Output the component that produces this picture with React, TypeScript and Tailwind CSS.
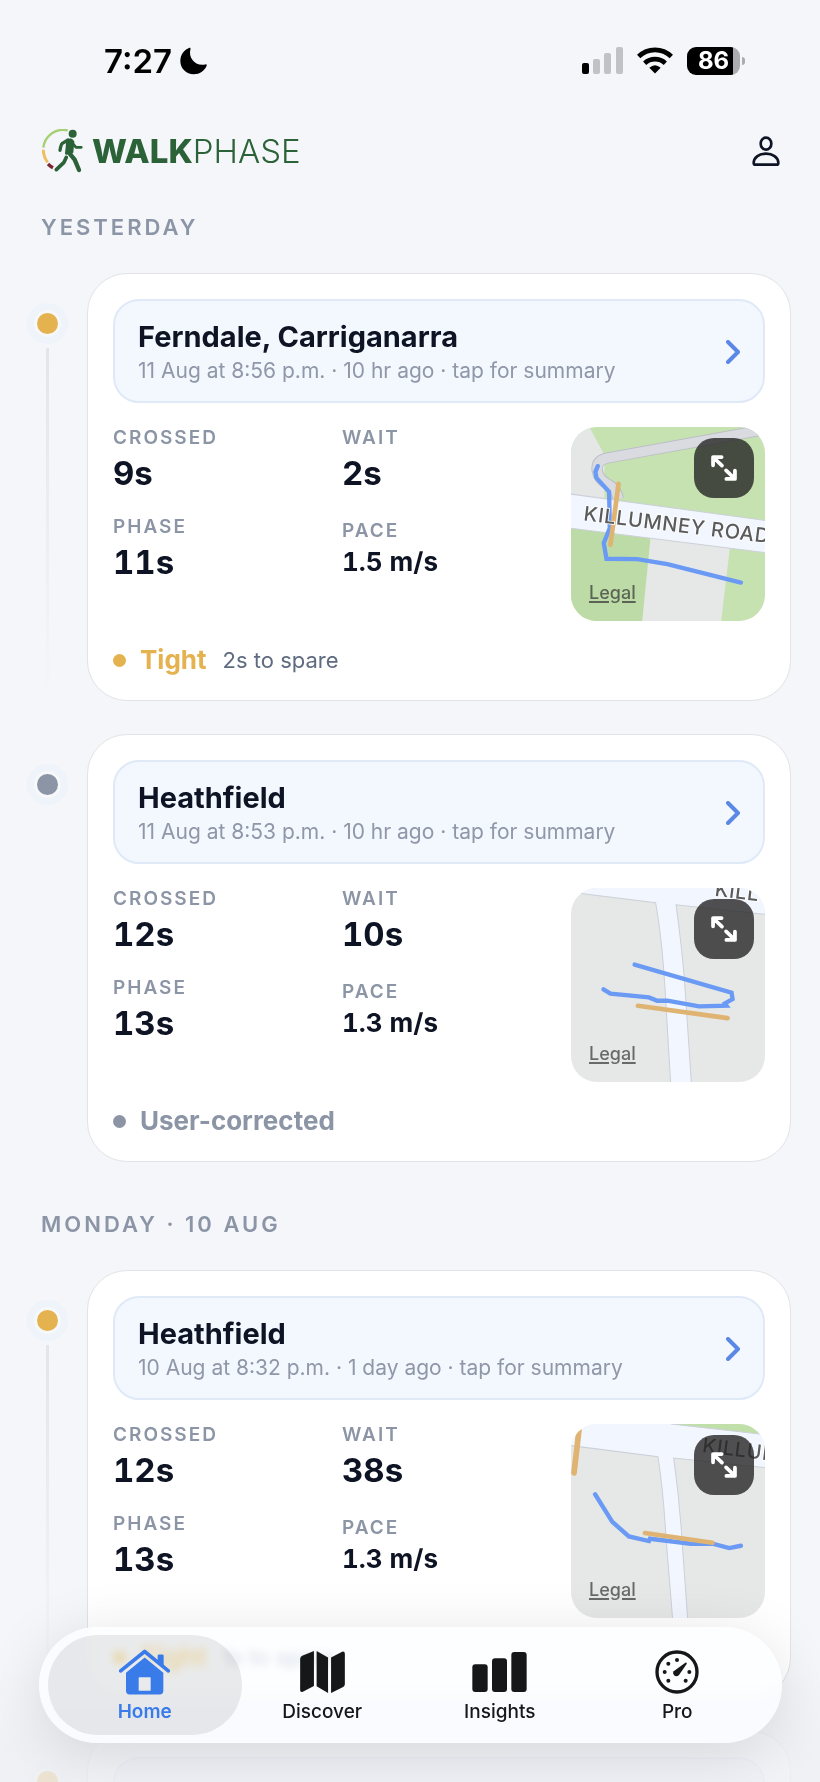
import React, { useState } from 'react';

type Tone = 'tight' | 'neutral';

interface Crossing {
  id: number;
  place: string;
  when: string;
  crossed: string;
  wait: string;
  phase: string;
  pace: string;
  tone: Tone;
  status: string;
  spare?: string;
  map: React.ReactNode;
}

interface DayGroup {
  title: string;
  crossings: Crossing[];
}

const routeProps = {
  fill: 'none',
  stroke: '#6b9af5',
  strokeWidth: 13,
  strokeLinecap: 'round' as const,
};

const crossingProps = {
  fill: 'none',
  stroke: '#dfb371',
  strokeWidth: 14,
  strokeLinecap: 'round' as const,
};

const roadProps = { fill: '#f2f6fe', stroke: '#ccd0d8', strokeWidth: 3 };

const roadLabelProps = {
  fontFamily: 'Inter, sans-serif',
  fontSize: 60,
  fontWeight: 500,
  fill: '#5b5b5b',
  stroke: '#ffffff',
  strokeWidth: 5,
  paintOrder: 'stroke',
  letterSpacing: 2,
};

function FerndaleMap() {
  return (
    <svg viewBox="0 0 580 580" className="block size-full">
      <rect width="580" height="580" fill="#c5e2b0" />
      <path d="M0 0H55L100 84V220L0 205Z" fill="#e4e7e6" />
      <path d="M0 300L238 330L213 580H0Z" fill="#bddba6" />
      <path d="M238 330L475 360L449 580H213Z" fill="#e6e8e7" />
      <path d="M600 4L112 92Q76 98 78 128Q82 158 112 172Q134 184 142 215" fill="none" stroke="#bcbfc6" strokeWidth="34" />
      <path d="M600 4L112 92Q76 98 78 128Q82 158 112 172Q134 184 142 215" fill="none" stroke="#d9dbe0" strokeWidth="28" />
      <path d="M-5 200L585 280V376L-5 302Z" {...roadProps} />
      <path d="M80 117L73 134L76 152L114 194L116 302L98 347L106 394L198 395L288 410L508 465" {...routeProps} />
      <path d="M142 170L118 352" {...crossingProps} />
      <text x="36" y="279" transform="rotate(7 36 279)" {...roadLabelProps}>
        KILLUMNEY ROAD
      </text>
    </svg>
  );
}

function HeathfieldMap() {
  return (
    <svg viewBox="0 0 580 580" className="block size-full">
      <rect width="580" height="580" fill="#e5e8e7" />
      <path
        d="M-5 -5H585V79L314 50Q335 200 343 330L360 585H298L281 300Q272 150 253 44L-5 12Z"
        {...roadProps}
      />
      <path d="M190 229L480 313L483 332L460 345L465 352L383 354L288 337L258 337L233 327L118 316L97 303" {...routeProps} />
      <path d="M200 352L468 389" {...crossingProps} />
      <text x="428" y="23" transform="rotate(7 428 23)" {...roadLabelProps}>
        KILL
      </text>
    </svg>
  );
}

function HeathfieldWideMap() {
  return (
    <svg viewBox="0 0 580 580" className="block size-full">
      <rect width="580" height="580" fill="#e5e8e7" />
      <path
        d="M-5 -5H585V131L307 102Q325 230 332 350L349 585H304L284 340Q276 200 260 98L-5 64Z"
        {...roadProps}
      />
      <path d="M300 0L585 32V-5H300Z" fill="#c0dfa9" stroke="#ccd0d8" strokeWidth="3" />
      <path d="M26 0L9 146" {...crossingProps} strokeWidth={17} />
      <path d="M72 210L123 292L173 336L233 350L236 343L358 358L423 358L473 371L508 364" {...routeProps} />
      <path d="M221 326L423 355" {...crossingProps} />
      <text x="391" y="84" transform="rotate(7 391 84)" {...roadLabelProps}>
        KILLUM
      </text>
    </svg>
  );
}

const days: DayGroup[] = [
  {
    title: 'Yesterday',
    crossings: [
      {
        id: 1,
        place: 'Ferndale, Carriganarra',
        when: '11 Aug at 8:56 p.m. · 10 hr ago · tap for summary',
        crossed: '9s',
        wait: '2s',
        phase: '11s',
        pace: '1.5 m/s',
        tone: 'tight',
        status: 'Tight',
        spare: '2s to spare',
        map: <FerndaleMap />,
      },
      {
        id: 2,
        place: 'Heathfield',
        when: '11 Aug at 8:53 p.m. · 10 hr ago · tap for summary',
        crossed: '12s',
        wait: '10s',
        phase: '13s',
        pace: '1.3 m/s',
        tone: 'neutral',
        status: 'User-corrected',
        map: <HeathfieldMap />,
      },
    ],
  },
  {
    title: 'Monday · 10 Aug',
    crossings: [
      {
        id: 3,
        place: 'Heathfield',
        when: '10 Aug at 8:32 p.m. · 1 day ago · tap for summary',
        crossed: '12s',
        wait: '38s',
        phase: '13s',
        pace: '1.3 m/s',
        tone: 'tight',
        status: 'Tight',
        spare: '1s to spare',
        map: <HeathfieldWideMap />,
      },
      {
        id: 4,
        place: 'Ferndale, Carriganarra',
        when: '10 Aug at 8:29 p.m. · 1 day ago · tap for summary',
        crossed: '9s',
        wait: '4s',
        phase: '11s',
        pace: '1.5 m/s',
        tone: 'tight',
        status: 'Tight',
        spare: '2s to spare',
        map: <FerndaleMap />,
      },
    ],
  },
];

const toneDot: Record<Tone, string> = {
  tight: 'bg-[#e5b250]',
  neutral: 'bg-[#8b95a6]',
};

const toneText: Record<Tone, string> = {
  tight: 'text-[#e5b250]',
  neutral: 'text-[#8b95a6]',
};

function StatusBar() {
  return (
    <div className="flex h-[121px] shrink-0 items-center justify-between pl-[104px] pr-[75px] text-black">
      <div className="flex items-center gap-2">
        <span className="text-[33px] font-semibold leading-10">7:27</span>
        <svg width="27" height="28" viewBox="0 0 80 80" fill="currentColor">
          <path d="M28 1C30 0 32 2 31 5C24 30 44 56 75 50C78 49 80 51 79 54C72 70 58 79 41 79C18 79 1 62 1 40C1 22 12 7 28 1Z" />
        </svg>
      </div>
      <div className="flex items-center">
        <svg width="41" height="27" viewBox="0 0 41 27">
          <rect x="0" y="16" width="7" height="11" rx="2" fill="#000" />
          <rect x="11" y="12" width="7" height="15" rx="2" fill="#c1c2c5" />
          <rect x="22" y="6" width="7" height="21" rx="2" fill="#c1c2c5" />
          <rect x="34" y="0" width="7" height="27" rx="2" fill="#c1c2c5" />
        </svg>
        <svg width="36" height="27" viewBox="0 0 108 80" className="ml-3.5" fill="none" stroke="#000" strokeWidth="14">
          <path d="M5 28A70 70 0 0 1 103 28" />
          <path d="M23 48A46 46 0 0 1 85 48" />
          <path d="M54 79L37 62Q54 47 71 62Z" fill="#000" stroke="none" />
        </svg>
        <div className="ml-3.5 flex items-center gap-0.5">
          <div className="flex h-7 w-[53px] items-center justify-center overflow-hidden rounded-[9px] bg-linear-to-r from-black from-86% to-[#abacaf] to-86%">
            <span className="text-2xl font-bold leading-7 text-white">86</span>
          </div>
          <div className="h-2 w-[3px] rounded-r-full bg-[#abacaf]" />
        </div>
      </div>
    </div>
  );
}

function Header() {
  return (
    <header className="flex h-[60px] shrink-0 items-center justify-between pl-[42px] pr-10">
      <a href="#" className="flex items-center gap-2" aria-label="WalkPhase">
        <svg width="42" height="44" viewBox="0 0 126 132" fill="none" strokeLinecap="round" strokeLinejoin="round">
          <path d="M77 4A60 60 0 0 0 4 56" stroke="#a6d071" strokeWidth="7" strokeLinecap="butt" />
          <path d="M4 62A60 60 0 0 0 17 100" stroke="#f0bd5c" strokeWidth="9" strokeLinecap="butt" />
          <path d="M18 105Q25 112 33 116" stroke="#7e2734" strokeWidth="10" strokeLinecap="butt" />
          <circle cx="92" cy="14" r="12" fill="#2b6238" />
          <path d="M76 34Q88 27 94 38L91 70L72 74Z" fill="#2b6238" stroke="#2b6238" strokeWidth="6" />
          <path d="M78 33L61 43Q57 46 54 64" stroke="#2b6238" strokeWidth="10" />
          <path d="M92 43L102 55H118" stroke="#2b6238" strokeWidth="8" />
          <path d="M80 70L98 92L111 123" stroke="#2b6238" strokeWidth="13" />
          <path d="M73 85L66 100L43 122" stroke="#2b6238" strokeWidth="11" />
        </svg>
        <span className="text-[33px] leading-9 text-[#2b6238]">
          <b className="font-extrabold">WALK</b>
          <span className="font-light">PHASE</span>
        </span>
      </a>
      <button type="button" aria-label="Profile">
        <svg width="28" height="30" viewBox="0 0 84 90" fill="none" stroke="#0e1424" strokeWidth="8">
          <ellipse cx="42" cy="23" rx="16" ry="18" />
          <path d="M10 86Q5 86 5 80C6 64 22 53 42 53S78 64 79 80Q79 86 74 86Z" />
        </svg>
      </button>
    </header>
  );
}

function Stat({ label, value, small = false }: { label: string; value: string; small?: boolean }) {
  return (
    <div className={small ? 'flex flex-col' : 'flex flex-col gap-1'}>
      <dt className="text-[19px] font-semibold uppercase leading-[22px] tracking-[2px] text-[#8b95a6]">{label}</dt>
      <dd className={`font-bold leading-10 tabular-nums text-[#0e1424] ${small ? 'text-[26px]' : 'text-[33px]'}`}>
        {value}
      </dd>
    </div>
  );
}

function CrossingCard({ crossing, last }: { crossing: Crossing; last: boolean }) {
  return (
    <li className="flex gap-[19px]">
      <div className="flex w-[41px] shrink-0 flex-col items-center gap-1 pt-[30px]">
        <span className="flex size-[41px] shrink-0 items-center justify-center rounded-full bg-[#eff3fa]">
          <span className="flex size-[27px] items-center justify-center rounded-full bg-[#f7f8fa]">
            <span className={`size-[21px] rounded-full ${toneDot[crossing.tone]}`} />
          </span>
        </span>
        {!last && <span className="w-[3px] flex-1 bg-linear-to-b from-[#e4e5e9] to-transparent" />}
      </div>

      <article className="min-w-0 flex-1 rounded-[40px] border border-[#e2e3e7] bg-white p-[25px]">
        <button
          type="button"
          className="flex h-[104px] w-full items-center justify-between rounded-[26px] border-2 border-[#dfe9f8] bg-[#f3f7fe] px-[23px] pt-0.5 text-left"
        >
          <span className="min-w-0">
            <span className="block text-[29px] font-bold leading-9 text-[#0e1424]">{crossing.place}</span>
            <span className="block text-[21px] leading-[31px] text-[#8f97a8]">{crossing.when}</span>
          </span>
          <svg width="14" height="24" viewBox="0 0 14 24" fill="none" stroke="#5a88e4" strokeWidth="4" strokeLinecap="round" strokeLinejoin="round">
            <path d="M2 2L12 12L2 22" />
          </svg>
        </button>

        <div className="mt-6 flex items-start">
          <dl className="grid flex-1 grid-cols-2 items-end gap-y-[23px]">
            <Stat label="Crossed" value={crossing.crossed} />
            <Stat label="Wait" value={crossing.wait} />
            <Stat label="Phase" value={crossing.phase} />
            <Stat label="Pace" value={crossing.pace} small />
          </dl>
          <div className="relative size-[194px] shrink-0 overflow-hidden rounded-[26px]">
            {crossing.map}
            <button
              type="button"
              aria-label="Expand map"
              className="absolute right-[11px] top-[11px] flex size-[60px] items-center justify-center rounded-[20px] bg-[#252525]/80"
            >
              <svg width="26" height="26" viewBox="0 0 76 76" fill="none" stroke="#fff" strokeWidth="11" strokeLinecap="round" strokeLinejoin="round">
                <path d="M31 6H6V30M8 8L32 31M45 70H70V46M68 68L44 45" />
              </svg>
            </button>
            <a href="#" className="absolute bottom-4 left-[18px] text-lg font-medium leading-6 text-[#333]/70 underline decoration-2 underline-offset-2">
              Legal
            </a>
          </div>
        </div>

        <div className="mt-6 flex h-[30px] items-center">
          <span className={`size-[13px] rounded-full ${toneDot[crossing.tone]}`} />
          <span className={`ml-3.5 text-[26px] font-bold leading-[30px] ${toneText[crossing.tone]}`}>
            {crossing.status}
          </span>
          {crossing.spare && <span className="ml-4 text-[22px] leading-[30px] text-[#5f6b80]">{crossing.spare}</span>}
        </div>
      </article>
    </li>
  );
}

const tabs = [
  {
    name: 'Home',
    icon: (
      <svg width="51" height="46" viewBox="0 0 153 137" fill="currentColor">
        <path d="M5 65L77 7L148 65" fill="none" stroke="currentColor" strokeWidth="11" strokeLinecap="round" strokeLinejoin="round" />
        <path d="M116 20Q116 16 120 16H130Q134 16 134 20V50L116 36Z" />
        <path fillRule="evenodd" d="M21 71L77 25L133 71V125Q133 136 122 136H32Q21 136 21 125ZM61 84Q59 84 59 86V123Q59 125 61 125H93Q95 125 95 123V86Q95 84 93 84Z" />
      </svg>
    ),
  },
  {
    name: 'Discover',
    icon: (
      <svg width="45" height="42" viewBox="0 0 133 125" fill="currentColor">
        <path d="M0 24Q0 17 6 14L41 0V104L8 121Q0 124 0 116Z" />
        <path d="M49 0L83 19V125L49 105Z" />
        <path d="M92 19L125 2Q133 0 133 8V98Q133 104 128 107L92 125Z" />
      </svg>
    ),
  },
  {
    name: 'Insights',
    icon: (
      <svg width="55" height="40" viewBox="0 0 163 120" fill="currentColor">
        <rect y="37" width="46" height="83" rx="9" />
        <rect x="59" y="19" width="45" height="101" rx="9" />
        <rect x="117" width="46" height="120" rx="9" />
      </svg>
    ),
  },
  {
    name: 'Pro',
    icon: (
      <svg width="44" height="44" viewBox="0 0 132 132" fill="currentColor">
        <circle cx="66" cy="66" r="60" fill="none" stroke="currentColor" strokeWidth="10" />
        <circle cx="66" cy="30" r="6" />
        <circle cx="40" cy="41" r="6" />
        <circle cx="29" cy="66" r="6" />
        <circle cx="40" cy="92" r="6" />
        <circle cx="92" cy="92" r="6" />
        <circle cx="103" cy="66" r="6" />
        <path d="M56 64L91 38Q96 37 95 42L72 75Q65 82 57 76Q51 70 56 64Z" />
      </svg>
    ),
  },
];

function TabBar() {
  const [active, setActive] = useState('Home');

  return (
    <nav className="absolute bottom-[39px] left-[39px] right-[38px] flex h-[116px] rounded-full bg-[#fcfdff]/75 py-2 pl-[17px] pr-4 shadow-[0_10px_60px_rgba(0,0,0,0.12)] backdrop-blur-[4px] backdrop-saturate-200">
      {tabs.map((tab) => (
        <button
          key={tab.name}
          type="button"
          onClick={() => setActive(tab.name)}
          className={`relative flex flex-1 flex-col items-center gap-[5px] pt-3.5 ${
            active === tab.name ? 'text-[#3a7bea]' : 'text-[#161719]'
          }`}
        >
          {active === tab.name && <span className="absolute -inset-x-2 inset-y-0 rounded-full bg-black/8" />}
          <span className="relative flex h-[46px] items-center">{tab.icon}</span>
          <span className={`relative text-[19px] leading-6 ${active === tab.name ? 'font-semibold' : 'font-medium'}`}>
            {tab.name}
          </span>
        </button>
      ))}
    </nav>
  );
}

export default function App() {
  return (
    <div className="relative flex h-screen flex-col overflow-hidden bg-[#f4f6fa] font-['Inter',sans-serif]">
      <StatusBar />
      <Header />
      <main className="flex min-h-0 flex-1 flex-col gap-12 overflow-y-auto px-[27px] pb-48 pt-8 [scrollbar-width:none]">
        {days.map((day) => (
          <section key={day.title} className="mr-0.5">
            <h2 className="ml-3.5 text-[22px] font-semibold uppercase leading-7 tracking-[3px] text-[#8b95a6]">
              {day.title}
            </h2>
            <ul className="mt-8 flex flex-col gap-[33px]">
              {day.crossings.map((crossing, i) => (
                <CrossingCard key={crossing.id} crossing={crossing} last={i === day.crossings.length - 1} />
              ))}
            </ul>
          </section>
        ))}
      </main>
      <div className="pointer-events-none absolute inset-x-0 bottom-0 h-28 bg-linear-to-b from-transparent to-[#eff0f4]/80 to-70%" />
      <TabBar />
    </div>
  );
}
